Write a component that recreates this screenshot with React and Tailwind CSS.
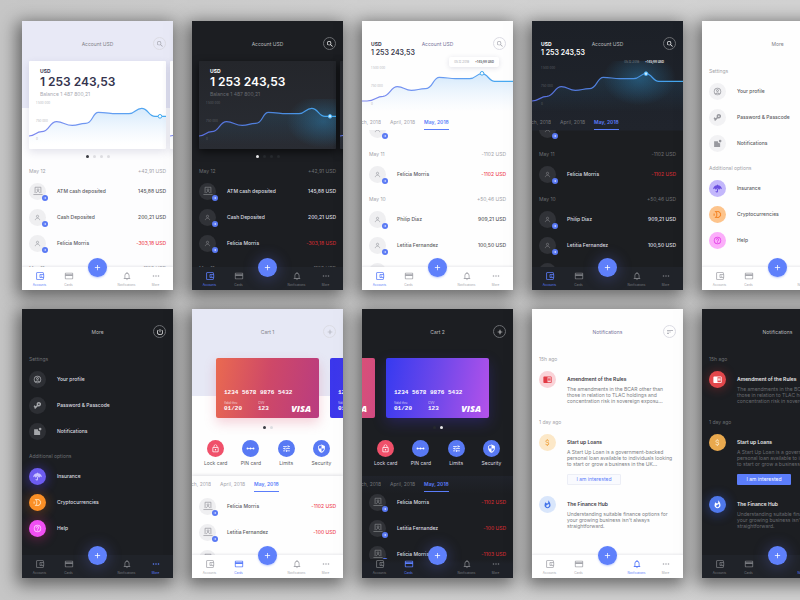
import React, { useId } from "react";
import {
  MdOutlineAccountBalanceWallet,
  MdCreditCard,
  MdNotificationsNone,
  MdMoreHoriz,
  MdAdd,
  MdSearch,
  MdLockOutline,
  MdTune,
  MdSecurity,
  MdChromeReaderMode,
  MdAttachMoney,
  MdWhatshot,
  MdPowerSettingsNew,
  MdSort,
  MdHelpOutline,
  MdVpnKey,
  MdOutlineAccountCircle,
  MdArrowForward,
} from "react-icons/md";
import { FaUmbrella } from "react-icons/fa";

/* ---------- small drawings ---------- */

function AtmIcon({ className }) {
  return (
    <svg viewBox="0 0 24 24" className={className} fill="none" stroke="currentColor" strokeWidth="1.800">
      <path d="M5 17V3h14v14M1 20.500h22M8 17c0-5 8-5 8 0" />
      <circle cx="12" cy="9" r="2.200" />
    </svg>
  );
}

function PersonIcon({ className }) {
  return (
    <svg viewBox="0 0 24 24" className={className} fill="none" stroke="currentColor" strokeWidth="2.200">
      <circle cx="12" cy="8" r="3.800" />
      <path d="M4.500 21c0-9 15-9 15 0" />
    </svg>
  );
}

function NoticeIcon({ className }) {
  return (
    <svg viewBox="0 0 24 24" className={className} fill="currentColor">
      <path d="M3 6h10a5 5 0 0 0 6 5v10H3z" />
      <circle cx="19" cy="5.500" r="3.500" />
    </svg>
  );
}

function CoinIcon({ className }) {
  return (
    <svg viewBox="0 0 24 24" className={className} fill="none" stroke="currentColor" strokeWidth="3">
      <path d="M7 4h8l5 5v6l-5 5H7l3-4V8z" />
      <path d="M3 9v6" />
    </svg>
  );
}

function PinIcon({ className }) {
  return (
    <svg viewBox="0 0 24 24" className={className} fill="currentColor">
      <circle cx="4" cy="12" r="2.500" />
      <circle cx="12" cy="12" r="2.500" />
      <circle cx="20" cy="12" r="2.500" />
      <path d="M4 11h16v2H4z" />
    </svg>
  );
}

/* ---------- shared parts ---------- */

const TABS = [
  { label: "Accounts", Icon: MdOutlineAccountBalanceWallet },
  { label: "Cards", Icon: MdCreditCard },
  null,
  { label: "Notifications", Icon: MdNotificationsNone },
  { label: "More", Icon: MdMoreHoriz },
];

function NavBar({ dark, active, see }) {
  const bg = see
    ? "bg-[linear-gradient(transparent_4px,#1e2128_9px)]"
    : dark
      ? "bg-[#202329]"
      : "bg-white shadow-[0_-1px_2px_rgba(60,60,90,0.1)]";
  return (
    <nav className={`relative grid h-[23px] shrink-0 grid-cols-5 px-[3px] ${bg}`}>
      {TABS.map((tab, i) =>
        tab ? (
          <button
            key={tab.label}
            type="button"
            className={`flex flex-col items-center gap-[2px] pt-[4px] ${
              tab.label === active ? "text-[#5b7dfa]" : dark ? "text-[#77797e]" : "text-[#a6a7ad]"
            }`}
          >
            <tab.Icon className="size-[10px]" />
            <span className="text-[3px] leading-[4px]">{tab.label}</span>
          </button>
        ) : (
          <div key={i} className="flex justify-center">
            <button
              type="button"
              aria-label="Add"
              className={`absolute top-[-9px] flex size-[19px] items-center justify-center rounded-full bg-[#5f80fb] text-white ${
                dark ? "shadow-[0_1px_12px_4px_rgba(80,90,180,0.25)]" : "shadow-[0_1px_2px_rgba(95,128,251,0.4)]"
              }`}
            >
              <MdAdd className="size-[9px]" />
            </button>
          </div>
        ),
      )}
    </nav>
  );
}

function Phone({ dark, surface, active, see, label, children }) {
  return (
    <section
      aria-label={label}
      className={`flex h-[269px] w-[151px] flex-col overflow-hidden shadow-[-2px_4px_16px_3px_rgba(0,0,0,0.5)] ${
        surface || (dark ? "bg-[#1c1e22]" : "bg-[#fefefe]")
      } ${dark ? "text-[#dcdde0]" : "text-[#5b5c62]"}`}
    >
      <div className={`min-h-0 flex-1 overflow-hidden ${see ? "-mb-[4px]" : ""}`}>{children}</div>
      <NavBar dark={dark} active={active} see={see} />
    </section>
  );
}

function Header({ dark, title, Icon, action, left, tint }) {
  return (
    <header className="grid h-[38px] grid-cols-[1fr_auto_1fr] items-start px-[7px] pt-[16px]">
      <div>{left}</div>
      <h2 className={`text-[5px] leading-[14px] ${tint || (dark ? "text-[#b9babd]" : "text-[#808188]")}`}>{title}</h2>
      {Icon ? (
        <button
          type="button"
          aria-label={action}
          className={`flex size-[13px] items-center justify-center justify-self-end rounded-full border ${
            dark ? "border-[#6b6d71] text-white" : "border-[#dcdce4] text-[#a3a4ad]"
          }`}
        >
          <Icon className="size-[8px]" />
        </button>
      ) : (
        <span />
      )}
    </header>
  );
}

function Dots({ dark, count, index }) {
  return (
    <div className="flex h-[10px] items-end justify-center gap-[4px] pb-[1px]">
      {Array.from({ length: count }, (_, i) => (
        <span
          key={i}
          className={`size-[3px] rounded-full ${
            i === index ? (dark ? "bg-[#e8e8ea]" : "bg-[#3a3b42]") : dark ? "bg-[#26292d]" : "bg-[#dddde1]"
          }`}
        />
      ))}
    </div>
  );
}

function SectionLabel({ dark, children, amount }) {
  return (
    <div
      className={`flex h-[19px] justify-between px-[7px] pt-[9px] text-[5px] leading-[6px] ${
        dark ? "text-[#6d6f73]" : "text-[#a2a3a9]"
      }`}
    >
      <span>{children}</span>
      <span>{amount}</span>
    </div>
  );
}

function Avatar({ dark, atm }) {
  return (
    <div
      className={`relative flex size-[17px] shrink-0 items-center justify-center rounded-full ${
        dark ? "bg-[#303237] text-[#7d7f84]" : "bg-[#efeff1] text-[#9a9ba1]"
      }`}
    >
      {atm ? <AtmIcon className="size-[10px]" /> : <PersonIcon className="size-[7px]" />}
      <span className="absolute -right-[2px] -bottom-[1px] flex size-[6px] items-center justify-center rounded-full bg-[#5878f4] text-white">
        <MdArrowForward className="size-[4px]" />
      </span>
    </div>
  );
}

function Entry({ dark, atm, name, amount, negative }) {
  return (
    <li className="flex h-[26px] items-center gap-[11px] px-[7px] text-[5px] leading-[6px]">
      <Avatar dark={dark} atm={atm} />
      <span className="flex-1 font-medium">{name}</span>
      <span className={`font-medium ${negative ? (dark ? "text-[#c92b31]" : "text-[#ee4a55]") : ""}`}>{amount}</span>
    </li>
  );
}

function MonthTabs({ dark }) {
  const idle = dark ? "text-[#6f7176]" : "text-[#a6a7ae]";
  return (
    <div className="flex h-[14px] items-end gap-[9px] text-[5px] leading-[6px]">
      <button type="button" className={`flex w-[19px] justify-end overflow-hidden pb-[5px] whitespace-nowrap ${idle}`}>
        March, 2018
      </button>
      <button type="button" className={`pb-[5px] whitespace-nowrap ${idle}`}>
        April, 2018
      </button>
      <button
        type="button"
        className="border-b border-[#5b7dfa] pb-[4px] font-semibold whitespace-nowrap text-[#5b7dfa]"
      >
        May, 2018
      </button>
    </div>
  );
}

/* ---------- account screens ---------- */

function Curve({ dark, line, width, height, dot }) {
  const id = useId();
  return (
    <svg viewBox={`0 0 ${width} ${height}`} className="absolute inset-0 h-full w-full" preserveAspectRatio="none">
      <defs>
        <linearGradient id={`${id}s`} x1="0" x2="1" y1="0" y2="0">
          <stop offset="0" stopColor={dark ? "#5a6ee0" : "#7d86ee"} />
          <stop offset="0.5" stopColor={dark ? "#4d83dc" : "#6c9bf2"} />
          <stop offset="1" stopColor="#43aaf0" />
        </linearGradient>
        <linearGradient id={`${id}f`} x1="0" x2="0" y1="0" y2="1">
          <stop offset="0.1" stopColor={dark ? "#2b7fb5" : "#a8d2f8"} stopOpacity={dark ? "0.16" : "0.42"} />
          <stop offset="0.9" stopColor={dark ? "#2b7fb5" : "#cfe6fc"} stopOpacity="0" />
        </linearGradient>
        <radialGradient id={`${id}g`}>
          <stop offset="0" stopColor="#2f93cf" stopOpacity="0.38" />
          <stop offset="1" stopColor="#2f93cf" stopOpacity="0" />
        </radialGradient>
      </defs>
      {dark && <ellipse cx={dot[0] - 20} cy={dot[1] + 15} rx="110" ry="80" fill={`url(#${id}g)`} />}
      <path d={`${line} V${height} H0 Z`} fill={`url(#${id}f)`} />
      <path d={line} fill="none" stroke={`url(#${id}s)`} strokeWidth="3.500" />
      <circle cx={dot[0]} cy={dot[1]} r="5.500" fill={dark ? "#c9ecff" : "#fff"} stroke="#43aaf0" strokeWidth="3" />
    </svg>
  );
}

function AxisLabels({ dark, className }) {
  return (
    <div
      className={`relative flex flex-col gap-[14px] text-[3px] leading-[4px] ${
        dark ? "text-[#5d6066]" : "text-[#b4b5bc]"
      } ${className}`}
    >
      <span>1 500 000</span>
      <span>750 000</span>
      <span>0</span>
    </div>
  );
}

const CARD_LINE =
  "M0 111C20 110 20 98 38 98C62 98 60 68 83 68C103 68 108 79 130 79C150 79 150 73 170 73C192 73 190 40 208 40C230 40 245 44 260 44L300 44C318 44 320 28 338 28C358 28 358 52 378 52L411 52";

function AccountCard({ dark, peek }) {
  return (
    <article
      className={`flex h-[88px] w-[137px] shrink-0 flex-col justify-end overflow-hidden rounded-[1px] ${
        dark
          ? "bg-[linear-gradient(#24262b,#292c33)] shadow-[0_3px_8px_rgba(0,0,0,0.6)]"
          : "bg-white shadow-[0_3px_8px_rgba(60,60,110,0.14)]"
      }`}
    >
      {!peek && (
        <div className="px-[11px]">
          <p className={`text-[5px] leading-[6px] font-bold ${dark ? "text-white" : "text-[#3d3c58]"}`}>USD</p>
          <p
            className={`mt-[2px] text-[12px] leading-[12px] font-semibold whitespace-nowrap ${
              dark ? "text-white" : "text-[#35344e]"
            }`}
          >
            1 253 243,53
          </p>
          <p className={`mt-[3px] text-[5px] leading-[6px] ${dark ? "text-[#686a70]" : "text-[#a9aab2]"}`}>
            Balance 1 487 800,21
          </p>
        </div>
      )}
      <div className="relative mt-[2px] h-[50px]">
        <Curve dark={dark} line={CARD_LINE} width={411} height={150} dot={[393, 52]} />
        {!peek && <AxisLabels dark={dark} className="px-[7px] pt-[2px]" />}
      </div>
    </article>
  );
}

function AccountScreen({ dark }) {
  return (
    <Phone
      dark={dark}
      label="Account cards"
      active="Accounts"
      surface={dark ? "" : "bg-[linear-gradient(#e8e9f6_87px,#fdfdfe_87px)]"}
    >
      <Header dark={dark} title="Account USD" Icon={MdSearch} action="Search" />
      <div className="flex gap-[4px] pt-[2px] pl-[7px]">
        <AccountCard dark={dark} />
        <AccountCard dark={dark} peek />
      </div>
      <Dots dark={dark} count={4} index={0} />
      <SectionLabel dark={dark} amount="+42,91 USD">
        May 12
      </SectionLabel>
      <ul>
        <Entry dark={dark} atm name="ATM cash deposited" amount="145,88 USD" />
        <Entry dark={dark} name="Cash Deposited" amount="200,21 USD" />
        <Entry dark={dark} name="Felicia Morris" amount="-303,18 USD" negative />
      </ul>
      <SectionLabel dark={dark} amount="-1102 USD">
        May 11
      </SectionLabel>
    </Phone>
  );
}

const LIGHT_LINE =
  "M0 120H15C40 120 42 106 63 106C84 104 86 77 106 77C126 77 128 88 148 88C168 88 170 83 190 83C214 83 212 49 232 49C252 49 262 53 280 53L323 53C342 53 342 38 360 38C378 38 380 61 398 61L453 61";
const DARK_LINE =
  "M0 120C22 120 24 106 45 106C66 104 68 77 88 77C108 77 110 88 130 88C150 88 152 83 172 83C196 83 194 49 214 49C234 49 244 53 262 53L305 53C324 53 324 38 342 38C360 38 362 61 380 61L453 61";

function HistoryScreen({ dark }) {
  const strong = dark ? "text-white" : "text-[#3d3d50]";
  return (
    <Phone
      dark={dark}
      label="Account history"
      active="Accounts"
      surface={dark ? "bg-[linear-gradient(#1c2027,#20242c_109px,#1c1e21_110px)]" : ""}
    >
      <Header
        dark={dark}
        title="Account USD"
        tint={dark ? "" : "text-[#77749b]"}
        Icon={MdSearch}
        action="Search"
        left={
          <div className={`pt-[4px] pl-[2px] font-bold whitespace-nowrap ${strong}`}>
            <p className="text-[5px] leading-[6px]">USD</p>
            <p className="mt-[2px] text-[7px] leading-[8px] font-semibold">1 253 243,53</p>
          </div>
        }
      />
      <div className="relative mt-[2px] h-[55px]">
        <Curve dark={dark} line={dark ? DARK_LINE : LIGHT_LINE} width={453} height={165} dot={dark ? [342, 38] : [360, 37]} />
        <AxisLabels dark={dark} className="px-[9px] pt-[5px]" />
        <div
          className={`absolute -top-[4px] right-[14px] flex h-[10px] items-center gap-[6px] rounded-[2px] px-[5px] text-[3px] whitespace-nowrap ${
            dark ? "" : "bg-white shadow-[0_1px_5px_rgba(70,70,110,0.16)]"
          }`}
        >
          <span className={dark ? "text-[#7d8188]" : "text-[#a6a7ae]"}>05.12.2018</span>
          <span className={`font-semibold ${dark ? "text-white" : "text-[#44454d]"}`}>+145,88 USD</span>
        </div>
      </div>
      <MonthTabs dark={dark} />
      <div className="overflow-hidden">
        <ul className="-mt-[14px]">
          <Entry dark={dark} name="" amount="" />
        </ul>
      </div>
      <SectionLabel dark={dark} amount="-1102 USD">
        May 11
      </SectionLabel>
      <ul>
        <Entry dark={dark} name="Felicia Morris" amount="-1102 USD" negative />
      </ul>
      <SectionLabel dark={dark} amount="+50,46 USD">
        May 10
      </SectionLabel>
      <ul>
        <Entry dark={dark} name="Philip Diaz" amount="909,21 USD" />
        <Entry dark={dark} name="Letitia Fernandez" amount="100,50 USD" />
        <Entry dark={dark} name="" amount="" />
      </ul>
    </Phone>
  );
}

/* ---------- more screens ---------- */

const SETTINGS = [
  { label: "Your profile", Icon: MdOutlineAccountCircle },
  { label: "Password & Passcode", Icon: MdVpnKey, turn: "rotate-[135deg]" },
  { label: "Notifications", Icon: NoticeIcon },
];
const OPTIONS = [
  {
    label: "Insurance",
    Icon: FaUmbrella,
    light: "bg-[#c3b7fb] text-[#6a4fe0]",
    dark: "bg-[#6d5cf0] text-[#c9c3ff] shadow-[0_1px_10px_3px_rgba(80,60,240,0.3)]",
  },
  {
    label: "Cryptocurrencies",
    Icon: CoinIcon,
    light: "bg-[#fdc48c] text-[#f5892d]",
    dark: "bg-[#fb8f26] text-[#ffd3a0] shadow-[0_1px_10px_3px_rgba(240,110,20,0.2)]",
  },
  {
    label: "Help",
    Icon: MdHelpOutline,
    light: "bg-[#fbaefa] text-[#e23be6]",
    dark: "bg-[#f04ff2] text-[#ffd0ff] shadow-[0_1px_10px_3px_rgba(220,40,130,0.25)]",
  },
];

function MenuRow({ label, Icon, tone, turn }) {
  return (
    <li>
      <button type="button" className="flex h-[26px] w-full items-center gap-[11px] px-[7px] text-[5px] leading-[6px] font-medium">
        <span className={`flex size-[17px] items-center justify-center rounded-full ${tone}`}>
          <Icon className={`size-[9px] ${turn || ""}`} />
        </span>
        {label}
      </button>
    </li>
  );
}

function MoreScreen({ dark }) {
  const plain = dark ? "bg-[#2d2f34] text-[#a5a7ab]" : "bg-[#f2f2f4] text-[#98999f]";
  return (
    <Phone dark={dark} label="More" active={dark ? "More" : ""}>
      <Header dark={dark} title="More" Icon={MdPowerSettingsNew} action="Log out" />
      <SectionLabel dark={dark}>Settings</SectionLabel>
      <ul>
        {SETTINGS.map((row) => (
          <MenuRow key={row.label} label={row.label} Icon={row.Icon} turn={row.turn} tone={plain} />
        ))}
      </ul>
      <SectionLabel dark={dark}>Additional options</SectionLabel>
      <ul>
        {OPTIONS.map((row) => (
          <MenuRow key={row.label} label={row.label} Icon={row.Icon} tone={dark ? row.dark : row.light} />
        ))}
      </ul>
    </Phone>
  );
}

/* ---------- card screens ---------- */

function BankCard({ tone }) {
  return (
    <article
      className={`flex h-[60px] w-[103px] shrink-0 flex-col justify-end rounded-[2px] px-[8px] pb-[6px] text-white ${tone}`}
    >
      <p className="font-['Liberation_Mono',monospace] text-[6px] leading-[7px] font-bold whitespace-nowrap">
        1234 5678 9876 5432
      </p>
      <div className="mt-[5px] flex items-end font-['Liberation_Mono',monospace] text-[6px] leading-[6px] font-bold">
        <div className="w-[34px]">
          <p className="font-['Inter',sans-serif] text-[3px] leading-[5px] font-normal opacity-70">Valid thru</p>
          <p>01/20</p>
        </div>
        <div className="flex-1">
          <p className="font-['Inter',sans-serif] text-[3px] leading-[5px] font-normal opacity-70">CVV</p>
          <p>123</p>
        </div>
        <p className="font-['Open_Sans',sans-serif] text-[9px] leading-[7px] font-extrabold italic">VISA</p>
      </div>
    </article>
  );
}

const ACTIONS = [
  { label: "Lock card", Icon: MdLockOutline, tone: "bg-[#f0506a]" },
  { label: "PIN card", Icon: PinIcon, tone: "bg-[#5879f4]" },
  { label: "Limits", Icon: MdTune, tone: "bg-[#5879f4]" },
  { label: "Security", Icon: MdSecurity, tone: "bg-[#5879f4]" },
];

function CardScreen({ dark }) {
  return (
    <Phone
      dark={dark}
      label="Cards"
      active="Cards"
      see={dark}
      surface={dark ? "" : "bg-[linear-gradient(#e6e8f5_87px,#fefefe_87px)]"}
    >
      <Header dark={dark} title={dark ? "Cart 2" : "Cart 1"} Icon={MdAdd} action="Add card" />
      <div className={`flex gap-[11px] pt-[11px] ${dark ? "-ml-[90px]" : "pl-[24px]"}`}>
        <BankCard
          tone={
            dark
              ? "bg-[linear-gradient(100deg,#ea6a50,#d24a82)]"
              : "bg-[linear-gradient(100deg,#ea6a50,#ce4868_50%,#b93c80)] shadow-[0_5px_12px_rgba(220,80,110,0.25)]"
          }
        />
        <BankCard
          tone={
            dark
              ? "bg-[linear-gradient(100deg,#363af0,#7048ea_50%,#b452ea)] shadow-[0_5px_14px_rgba(70,50,220,0.28)]"
              : "bg-[linear-gradient(100deg,#3a36ec,#5a44ea)]"
          }
        />
      </div>
      <div className="pt-[2px]">
        <Dots dark={dark} count={2} index={dark ? 1 : 0} />
      </div>
      <div className="grid grid-cols-4 pt-[10px] pr-[4px] pl-[6px]">
        {ACTIONS.map(({ label, Icon, tone }) => (
          <button key={label} type="button" className="flex flex-col items-center gap-[3px] text-[5px] leading-[6px]">
            <span className={`flex size-[17px] items-center justify-center rounded-full text-white ${tone}`}>
              <Icon className="size-[9px]" />
            </span>
            <span className="whitespace-nowrap">{label}</span>
          </button>
        ))}
      </div>
      <div
        className={`mt-[10px] pt-[2px] ${
          dark ? "bg-[linear-gradient(#20232b,#1c1e22_18px)]" : "shadow-[0_-1px_3px_rgba(50,50,80,0.14)]"
        }`}
      >
        <MonthTabs dark={dark} />
        <ul className={dark ? "-mt-[3px]" : "pt-[1px]"}>
          <Entry dark={dark} atm name="Felicia Morris" amount="-1102 USD" negative />
          <Entry dark={dark} atm name="Letitia Fernandez" amount="-100 USD" negative />
          <Entry dark={dark} atm name={dark ? "Felicia Morris" : ""} amount={dark ? "-1103 USD" : ""} negative />
        </ul>
      </div>
    </Phone>
  );
}

/* ---------- notification screens ---------- */

function Notice({ dark, Icon, tone, title, lines, children }) {
  return (
    <article className="flex gap-[11px] px-[7px] pt-[5px] pb-[6px]">
      <span className={`flex size-[17px] shrink-0 items-center justify-center rounded-full ${tone}`}>
        <Icon className="size-[9px]" />
      </span>
      <div className="pt-[5px]">
        <h3 className={`text-[5px] leading-[7px] font-semibold ${dark ? "text-[#e6e6e8]" : "text-[#3f4046]"}`}>{title}</h3>
        <p className={`mt-[3px] text-[5px] leading-[6px] ${dark ? "text-[#696b70]" : "text-[#7d7e85]"}`}>
          {lines.map((line) => (
            <span key={line} className="block whitespace-nowrap">
              {line}
            </span>
          ))}
        </p>
        {children}
      </div>
    </article>
  );
}

function NotificationScreen({ dark }) {
  return (
    <Phone dark={dark} label="Notifications" active="Notifications">
      <Header
        dark={dark}
        title="Notifications"
        tint={dark ? "" : "text-[#77749b]"}
        Icon={MdSort}
        action="Sort"
      />
      <SectionLabel dark={dark}>15h ago</SectionLabel>
      <Notice
        dark={dark}
        Icon={MdChromeReaderMode}
        tone={dark ? "bg-[#e2474b] text-white shadow-[0_1px_10px_2px_rgba(220,50,50,0.25)]" : "bg-[#fad3d8] text-[#e23b45]"}
        title="Amendment of the Rules"
        lines={[
          "The amendments in the BCAR other than",
          "those in relation to TLAC holdings and",
          "concentration risk in sovereign exposu...",
        ]}
      />
      <SectionLabel dark={dark}>1 day ago</SectionLabel>
      <Notice
        dark={dark}
        Icon={MdAttachMoney}
        tone={dark ? "bg-[#e9a94e] text-[#fbe3bd]" : "bg-[#fce8c8] text-[#efa544]"}
        title="Start up Loans"
        lines={[
          "A Start Up Loan is a government-backed",
          "personal loan available to individuals looking",
          "to start or grow a business in the UK...",
        ]}
      >
        <button
          type="button"
          className={`mt-[7px] block h-[11px] w-[54px] rounded-[1px] text-[5px] leading-[9px] ${
            dark ? "bg-[#5b7dfa] text-white" : "border border-[#eceef6] bg-[#f9fafe] text-[#5b7dfa]"
          }`}
        >
          I am interested
        </button>
      </Notice>
      <Notice
        dark={dark}
        Icon={MdWhatshot}
        tone={dark ? "bg-[#4f78ec] text-white shadow-[0_1px_10px_3px_rgba(60,100,240,0.25)]" : "bg-[#d9e6fb] text-[#4475ea]"}
        title="The Finance Hub"
        lines={["Understanding suitable finance options for", "your growing business isn't always", "straightforward."]}
      />
    </Phone>
  );
}

export default function App() {
  return (
    <main className="min-h-screen overflow-hidden bg-[linear-gradient(90deg,#c6c6c6,#d0d0d0_50%,#d2d2d2)] pt-[21px] pb-[22px] pl-[22px] font-['Inter',sans-serif]">
      <div className="grid grid-cols-[repeat(5,max-content)] gap-[19px]">
        <AccountScreen />
        <AccountScreen dark />
        <HistoryScreen />
        <HistoryScreen dark />
        <MoreScreen />
        <MoreScreen dark />
        <CardScreen />
        <CardScreen dark />
        <NotificationScreen />
        <NotificationScreen dark />
      </div>
    </main>
  );
}
